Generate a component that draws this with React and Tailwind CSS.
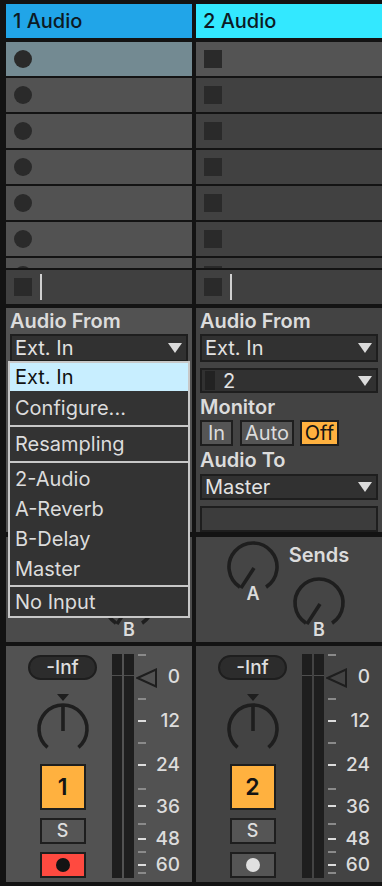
import React from "react";

const BORDER = "border-[#1e1e1e]";

function Tri({ className = "" }) {
  return (
    <svg width="14" height="10" viewBox="0 0 14 10" className={className}>
      <polygon points="0,0 14,0 7,10" fill="#dcdcdc" />
    </svg>
  );
}

function Knob({ gap = 38, pointer = "pan" }) {
  const c = 28;
  const r = 24;
  const a = (gap * Math.PI) / 180;
  const lx = c - r * Math.sin(a);
  const ly = c + r * Math.cos(a);
  const rx = c + r * Math.sin(a);
  const d = `M ${lx} ${ly} A ${r} ${r} 0 1 1 ${rx} ${ly}`;
  return (
    <svg width="56" height="56" viewBox="0 0 56 56">
      <path d={d} fill="none" stroke="#1e1e1e" strokeWidth="3.6" />
      {pointer === "pan" ? (
        <line x1={c} y1={3} x2={c} y2={30} stroke="#1e1e1e" strokeWidth="3.6" />
      ) : (
        <line x1={c + 1} y1={c + 1} x2={lx + 1} y2={ly + 1} stroke="#1e1e1e" strokeWidth="3.6" />
      )}
    </svg>
  );
}

function Dropdown({ children, h = "h-[28px]", extra = null }) {
  return (
    <div className={`${h} flex items-center border-2 ${BORDER} bg-[#313131] pl-[3px] pr-[4px]`}>
      {extra}
      <span className="flex-1 text-[20px] leading-none text-[#e2e2e2]">{children}</span>
      <Tri />
    </div>
  );
}

const ticks = [
  { y: 655, w: false },
  { y: 699, w: false },
  { y: 721, w: true },
  { y: 743, w: false },
  { y: 765, w: true },
  { y: 789, w: false },
  { y: 806, w: true },
  { y: 824, w: false },
  { y: 839, w: true },
  { y: 852, w: false },
  { y: 865, w: true },
  { y: 873, w: false },
];
const nums = [
  { y: 677, t: "0" },
  { y: 721, t: "12" },
  { y: 765, t: "24" },
  { y: 807, t: "36" },
  { y: 839, t: "48" },
  { y: 865, t: "60" },
];

function Mixer({ n, bg, armed }) {
  return (
    <div className={`h-[236px] flex ${bg}`}>
      <div className="ml-[22px] w-[69px] flex flex-col items-center pt-[9px]">
        <div className={`w-[69px] h-[25px] rounded-full border-2 ${BORDER} bg-[#2c2c2c] flex items-center justify-center text-[19px] font-medium text-[#dedede] leading-none`}>
          -Inf
        </div>
        <svg width="12" height="7" viewBox="0 0 12 7" className="mt-[14px]">
          <polygon points="0,0 12,0 6,7" fill="#1e1e1e" />
        </svg>
        <div className="mt-[1px] h-[54px] w-[56px] flex items-center justify-center">
          <Knob gap={40} pointer="pan" />
        </div>
        <div className={`mt-[8px] w-[46px] h-[46px] border-2 ${BORDER} bg-[#ffb13f] flex items-center justify-center text-[23px] font-semibold text-[#141414] leading-none`}>
          {n}
        </div>
        <div className={`mt-[8px] w-[46px] h-[26px] border-2 ${BORDER} bg-[#555555] flex items-center justify-center text-[18px] font-medium text-[#dedede] leading-none`}>
          S
        </div>
        <div className={`mt-[8px] w-[46px] h-[26px] border-2 ${BORDER} ${armed ? "bg-[#ff4a40]" : "bg-[#555555]"} flex items-center justify-center`}>
          <div className={`w-[14px] h-[14px] rounded-full ${armed ? "bg-[#141414]" : "bg-[#e0e0e0]"}`} />
        </div>
      </div>
      <div className="ml-[15px] mt-[8px] h-[224px] flex gap-[2px]">
        {[0, 1].map((i) => (
          <div key={i} className="w-[10px] h-full flex flex-col bg-[#1e1e1e]">
            <div className="h-[21px]" />
            <div className="h-[1px] bg-[#4e4e4e]" />
          </div>
        ))}
      </div>
      <div className="relative w-[50px] h-full ml-[2px]">
        <svg width="22" height="20" viewBox="0 0 22 20" className="absolute left-0 top-[22px]">
          <polygon points="1.5,10 20,1.5 20,18.5" fill="none" stroke="#1e1e1e" strokeWidth="2" />
        </svg>
        {ticks.map((t) => (
          <div
            key={t.y}
            className={`absolute left-[2px] w-[8px] h-[2px] ${t.w ? "bg-[#dcdcdc]" : "bg-[#8a8a8a]"}`}
            style={{ top: t.y - 646 - 1 }}
          />
        ))}
        {nums.map((m) => (
          <div
            key={m.t}
            className="absolute right-[6px] h-[22px] leading-[22px] text-[19px] font-medium text-[#dcdcdc]"
            style={{ top: m.y - 646 - 11 }}
          >
            {m.t}
          </div>
        ))}
      </div>
    </div>
  );
}

function Sends({ bg, showA = true }) {
  return (
    <div className={`h-[105px] flex ${bg}`}>
      <div className="ml-[29px] w-[56px] flex flex-col items-center pt-[2px]">
        <Knob gap={33} pointer="send" />
        {showA && <div className="-mt-[12px] text-[18px] font-semibold leading-[22px] text-[#dcdcdc]">A</div>}
      </div>
      <div className="ml-[3px] w-[70px] flex flex-col items-center pt-[7px]">
        <div className="text-[20px] font-semibold leading-[22px] text-[#dcdcdc]">Sends</div>
        <div className="mt-[9px]">
          <Knob gap={33} pointer="send" />
        </div>
        <div className="-mt-[12px] text-[18px] font-semibold leading-[22px] text-[#dcdcdc]">B</div>
      </div>
    </div>
  );
}

function Slots({ first, rest, icon }) {
  return (
    <div className="h-[226px] overflow-hidden flex flex-col gap-[2px]">
      {[0, 1, 2, 3, 4, 5, 6].map((i) => (
        <div key={i} className={`h-[34px] shrink-0 flex items-center pl-[8px] ${i === 0 ? first : rest}`}>
          {icon === "circle" ? (
            <div className="w-[18px] h-[18px] rounded-full bg-[#2a2a2a]" />
          ) : (
            <div className="w-[18px] h-[18px] bg-[#2a2a2a]" />
          )}
        </div>
      ))}
    </div>
  );
}

function StopRow() {
  return (
    <div className="h-[34px] flex items-center pl-[8px] bg-[#404040]">
      <div className="w-[18px] h-[18px] bg-[#2a2a2a]" />
      <div className="ml-[8px] w-[2px] h-[26px] bg-[#d0d0d0]" />
    </div>
  );
}

function Label({ children }) {
  return <div className="h-[22px] leading-[22px] text-[20px] font-semibold text-[#dcdcdc]">{children}</div>;
}

function MonBtn({ children, active, w }) {
  return (
    <div
      className={`${w} h-[26px] border-2 ${BORDER} flex items-center justify-center text-[20px] leading-none ${
        active ? "bg-[#ffb13f] text-[#141414]" : "bg-[#555555] text-[#dcdcdc]"
      }`}
    >
      {children}
    </div>
  );
}

function MenuItem({ children, active, h = "h-[30px]" }) {
  return (
    <div className={`${h} flex items-center pl-[5px] text-[20px] leading-none ${active ? "bg-[#c8eeff] text-[#111111]" : "text-[#dcdcdc]"}`}>
      {children}
    </div>
  );
}

function Sep() {
  return <div className="h-[2px] bg-[#c8c8c8]" />;
}

export default function App() {
  return (
    <div className="w-[382px] h-[886px] bg-[#131313] overflow-hidden font-['Inter','Noto_Sans',sans-serif] antialiased">
      <div className="flex gap-[4px] pl-[6px] pt-[4px]">
        {/* Track 1 */}
        <div className="relative w-[186px] flex flex-col">
          <div className="h-[34px] bg-[#21a5e8] flex items-center pl-[7px] text-[20px] font-medium text-[#0c1a24]">1 Audio</div>
          <div className="h-[4px]" />
          <Slots first="bg-[#738a92]" rest="bg-[#525252]" icon="circle" />
          <div className="h-[2px]" />
          <StopRow />
          <div className="h-[4px]" />
          <div className="h-[224px] bg-[#525252] px-[4px] pt-[2px] flex flex-col">
            <Label>Audio From</Label>
            <div className="mt-[2px]">
              <Dropdown>Ext. In</Dropdown>
            </div>
          </div>
          <div className="h-[5px]" />
          <Sends bg="bg-[#4b4b4b]" showA={false} />
          <div className="h-[4px]" />
          <Mixer n="1" bg="bg-[#525252]" armed />

          {/* open menu */}
          <div className="absolute left-[2px] top-[357px] w-[182px] border-2 border-[#c8c8c8] bg-[#333333]">
            <MenuItem active h="h-[28px]">Ext. In</MenuItem>
            <MenuItem h="h-[34px]">Configure...</MenuItem>
            <Sep />
            <MenuItem h="h-[34px]">Resampling</MenuItem>
            <Sep />
            <div className="py-[1px]">
              <MenuItem>2-Audio</MenuItem>
              <MenuItem>A-Reverb</MenuItem>
              <MenuItem>B-Delay</MenuItem>
              <MenuItem>Master</MenuItem>
            </div>
            <Sep />
            <MenuItem h="h-[29px]">No Input</MenuItem>
          </div>
        </div>

        {/* Track 2 */}
        <div className="w-[186px] flex flex-col">
          <div className="h-[34px] bg-[#33e8ff] flex items-center pl-[7px] text-[20px] font-medium text-[#0c1a24]">2 Audio</div>
          <div className="h-[4px]" />
          <Slots first="bg-[#545454]" rest="bg-[#414141]" icon="square" />
          <div className="h-[2px]" />
          <StopRow />
          <div className="h-[4px]" />
          <div className="h-[224px] bg-[#434343] px-[4px] pt-[2px] flex flex-col">
            <Label>Audio From</Label>
            <div className="mt-[2px]">
              <Dropdown>Ext. In</Dropdown>
            </div>
            <div className="mt-[6px]">
              <Dropdown h="h-[25px]" extra={<div className="w-[10px] h-[19px] bg-[#222222] mr-[8px]" />}>
                2
              </Dropdown>
            </div>
            <div className="mt-[3px]">
              <Label>Monitor</Label>
            </div>
            <div className="mt-[2px] flex">
              <MonBtn w="w-[33px]">In</MonBtn>
              <div className="w-[7px]" />
              <MonBtn w="w-[54px]">Auto</MonBtn>
              <div className="w-[6px]" />
              <MonBtn w="w-[39px]" active>Off</MonBtn>
            </div>
            <div className="mt-[3px]">
              <Label>Audio To</Label>
            </div>
            <div className="mt-[3px]">
              <Dropdown h="h-[26px]">Master</Dropdown>
            </div>
            <div className={`mt-[6px] h-[26px] border-2 ${BORDER} bg-[#3c3c3c]`} />
          </div>
          <div className="h-[5px]" />
          <Sends bg="bg-[#454545]" />
          <div className="h-[4px]" />
          <Mixer n="2" bg="bg-[#434343]" armed={false} />
        </div>
      </div>
    </div>
  );
}
